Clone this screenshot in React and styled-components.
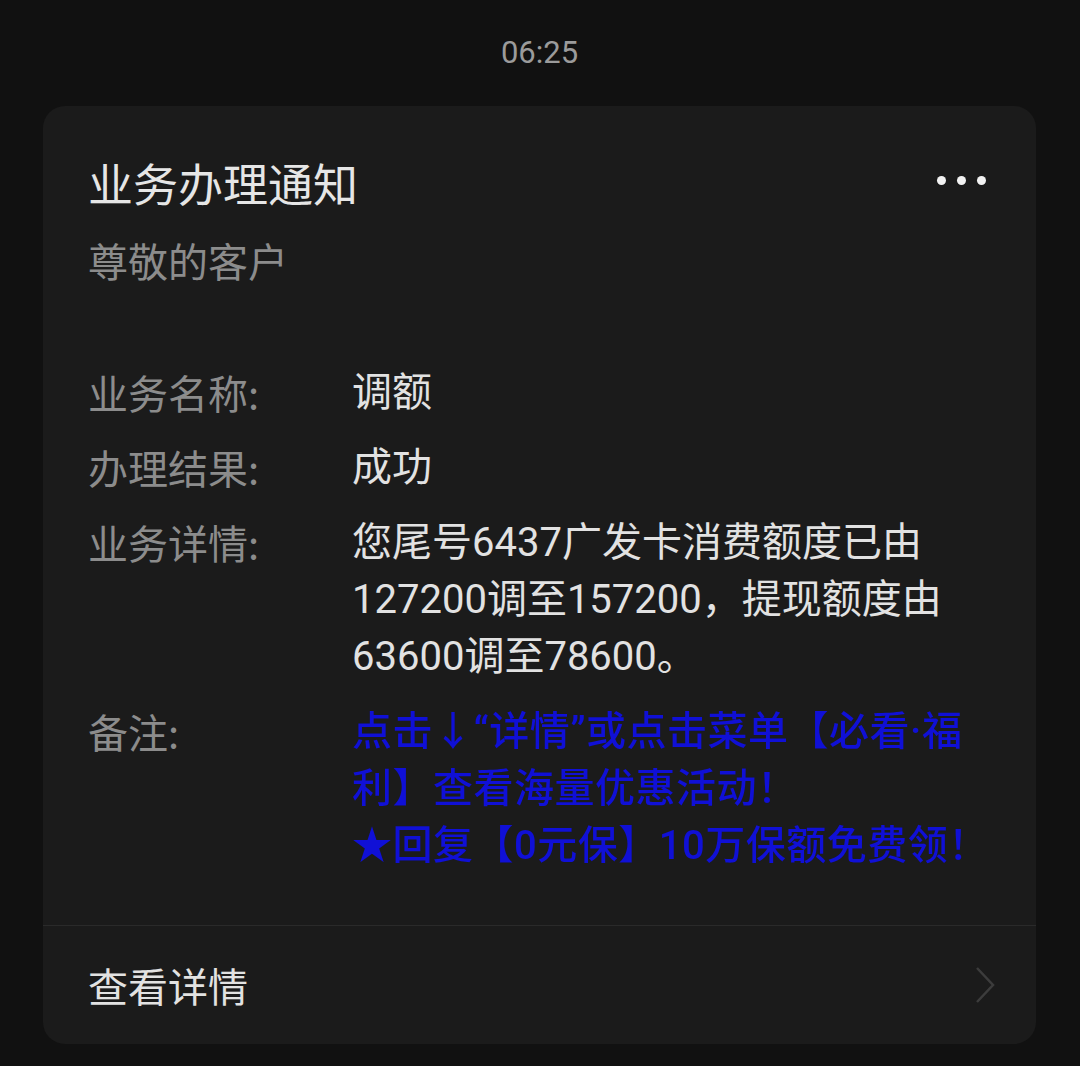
import styled, { createGlobalStyle } from "styled-components";

const GlobalStyle = createGlobalStyle`
  body {
    margin: 0;
    background: #111111;
    font-family: Roboto, "Noto Sans CJK SC", sans-serif;
  }
`

const Page = styled.div`
  min-height: 1066px;
  box-sizing: border-box;
  padding: 0 44px 23px 43px;
  background: #111111;
`

const Time = styled.div`
  height: 106px;
  line-height: 106px;
  text-align: center;
  font-family: Roboto, "Noto Sans", sans-serif;
  font-size: 31px;
  color: #9b9b9b;
`

const Card = styled.div`
  background: #1b1b1b;
  border-radius: 22px;
  overflow: hidden;
`

const Body = styled.div`
  padding: 47px 45px 51px 45px;
`

const Header = styled.div`
  display: flex;
  align-items: center;
  justify-content: space-between;
`

const Title = styled.div`
  font-family: "Noto Sans CJK SC", sans-serif;
  font-size: 45px;
  line-height: 60px;
  color: #e6e6e6;
`

const Dots = styled.div`
  display: flex;
  gap: 11px;
  margin-right: 5px;
  margin-bottom: 6px;
`

const Dot = styled.span`
  width: 9px;
  height: 9px;
  border-radius: 50%;
  background: #f2f2f2;
`

const Subtitle = styled.div`
  margin-top: 19px;
  font-family: "Noto Sans CJK SC", sans-serif;
  font-size: 40px;
  line-height: 56px;
  color: #8c8c8c;
`

const Fields = styled.div`
  margin-top: 76px;
  display: grid;
  grid-template-columns: 264px 1fr;
  row-gap: 18px;
`

const Label = styled.div`
  font-family: "Noto Sans CJK SC", sans-serif;
  font-size: 40px;
  line-height: 57px;
  color: #8c8c8c;
`

const Value = styled.div`
  font-family: Roboto, "Noto Sans CJK SC", sans-serif;
  font-size: 40px;
  line-height: 57px;
  white-space: nowrap;
  color: ${p => (p.$promo ? "#1010d6" : "#e2e2e2")};
  font-weight: ${p => (p.$promo ? 500 : 400)};
  letter-spacing: ${p => (p.$promo ? "0.5px" : "0")};
  filter: ${p => (p.$promo ? "blur(0.7px)" : "none")};
`

const Divider = styled.div`
  height: 1px;
  background: #2a2a2a;
`

const Footer = styled.div`
  height: 118px;
  padding: 0 40px 0 45px;
  display: flex;
  align-items: center;
  justify-content: space-between;
`

const FooterText = styled.div`
  font-family: "Noto Sans CJK SC", sans-serif;
  font-size: 40px;
  color: #e2e2e2;
`

const rows = [
  { label: "业务名称:", lines: ["调额"] },
  { label: "办理结果:", lines: ["成功"] },
  {
    label: "业务详情:",
    lines: ["您尾号6437广发卡消费额度已由", "127200调至157200，提现额度由", "63600调至78600。"],
  },
]

const promo = ["点击↓“详情”或点击菜单【必看·福", "利】查看海量优惠活动！", "★回复【0元保】10万保额免费领！"]

const Lines = ({ lines }) =>
  lines.map((l, i) => (
    <div key={i}>{l}</div>
  ))

const App = () => {
  return (
    <>
      <GlobalStyle />
      <Page>
        <Time>06:25</Time>
        <Card>
          <Body>
            <Header>
              <Title>业务办理通知</Title>
              <Dots>
                <Dot />
                <Dot />
                <Dot />
              </Dots>
            </Header>
            <Subtitle>尊敬的客户</Subtitle>
            <Fields>
              {rows.map(r => [
                <Label key={r.label + "l"}>{r.label}</Label>,
                <Value key={r.label + "v"}>
                  <Lines lines={r.lines} />
                </Value>,
              ])}
              <Label>备注:</Label>
              <Value $promo>
                <Lines lines={promo} />
              </Value>
            </Fields>
          </Body>
          <Divider />
          <Footer>
            <FooterText>查看详情</FooterText>
            <svg width="22" height="38" viewBox="0 0 22 38">
              <path d="M3 2 L19 19 L3 36" fill="none" stroke="#3c3c3c" strokeWidth="2.5" />
            </svg>
          </Footer>
        </Card>
      </Page>
    </>
  )
}

export default App
